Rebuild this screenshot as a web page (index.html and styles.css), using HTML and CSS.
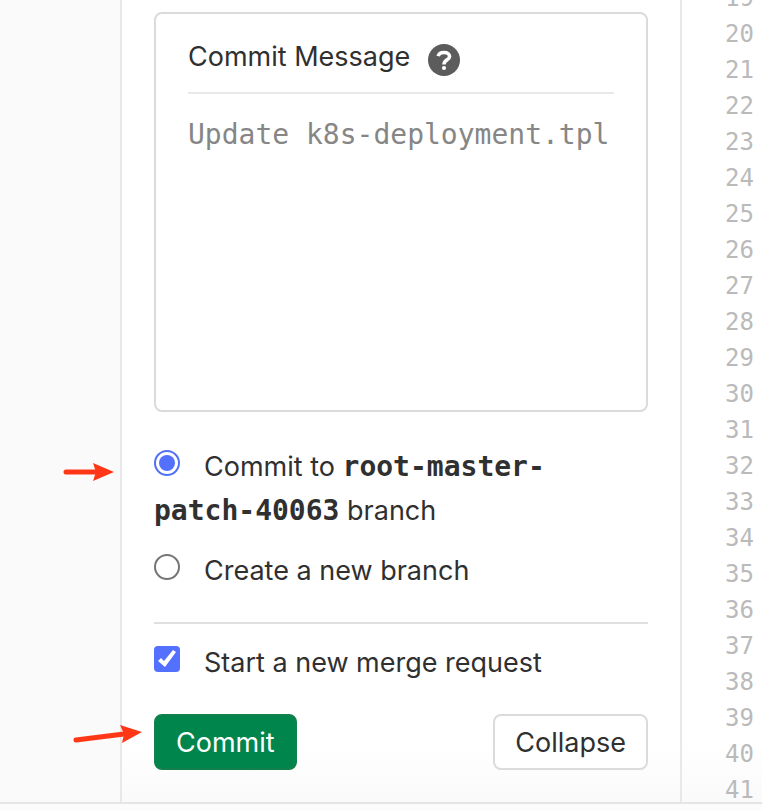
FILE: index.html
```html
<!DOCTYPE html>
<html lang="en">
  <head>
    <meta charset="UTF-8" />
    <meta name="viewport" content="width=device-width, initial-scale=1.0" />
    <title>Commit changes</title>
    <link rel="stylesheet" href="styles.css">
  </head>
  <body>
    <main class="ide">
      <div class="gutter"></div>

      <form class="commit-panel">
        <div class="message-box">
          <div class="message-header">
            <label for="message">Commit Message</label>
            <svg class="help-icon" viewBox="0 0 32 32" aria-hidden="true">
              <circle cx="16" cy="16" r="16" fill="#5c5c5c" />
              <path d="M10.2 12.2C10.7 9.8 12.8 8.5 16 8.5C19.4 8.5 21.6 10.1 21.6 12.6C21.6 16 16 15.6 16 20.4" fill="none" stroke="#fff" stroke-width="3.6" />
              <circle cx="16" cy="24" r="2.1" fill="#fff" />
            </svg>
          </div>
          <textarea id="message" placeholder="Update k8s-deployment.tpl"></textarea>
        </div>

        <label class="option">
          <input type="radio" name="branch" checked />Commit to <strong>root-master-patch-40063</strong> branch
        </label>
        <label class="option">
          <input type="radio" name="branch" />Create a new branch
        </label>

        <hr />

        <label class="option">
          <input type="checkbox" checked />Start a new merge request
        </label>

        <div class="actions">
          <button type="submit" class="btn btn-success">Commit</button>
          <button type="button" class="btn">Collapse</button>
        </div>
      </form>

      <div class="editor">
        <div class="line-numbers">
          <div>19</div>
          <div>20</div>
          <div>21</div>
          <div>22</div>
          <div>23</div>
          <div>24</div>
          <div>25</div>
          <div>26</div>
          <div>27</div>
          <div>28</div>
          <div>29</div>
          <div>30</div>
          <div>31</div>
          <div>32</div>
          <div>33</div>
          <div>34</div>
          <div>35</div>
          <div>36</div>
          <div>37</div>
          <div>38</div>
          <div>39</div>
          <div>40</div>
          <div>41</div>
        </div>
      </div>

      <!-- red pointers over the panel -->
      <svg class="arrow arrow-branch" viewBox="0 0 52 20" aria-hidden="true">
        <path d="M3 10H34" stroke="#ff3717" stroke-width="5" stroke-linecap="round" />
        <path d="M30 1L51 10L30 19L33 10Z" fill="#ff3717" />
      </svg>
      <svg class="arrow arrow-commit" viewBox="0 0 70 24" aria-hidden="true">
        <path d="M3 19L51 13" stroke="#ff3717" stroke-width="5" stroke-linecap="round" />
        <path d="M47 4L69 11L49 22L51 13Z" fill="#ff3717" />
      </svg>
    </main>
    <footer class="status-bar"></footer>
  </body>
</html>
```
FILE: styles.css
```css
* {
  box-sizing: border-box;
}
body {
  display: flex;
  flex-direction: column;
  height: 100vh;
  margin: 0;
  color: #303030;
  font-family: Inter, sans-serif;
  font-size: 27px;
  line-height: 44px;
}
.ide {
  position: relative;
  display: flex;
  flex: 1;
  min-height: 0;
  overflow: hidden;
  background: linear-gradient(to top, #fafafa, #fff 60px);
}
.gutter {
  width: 120px;
  background-color: #fafafa;
}
.commit-panel {
  width: 562px;
  padding: 12px 32px 32px;
  border-left: 2px solid #e8e8e8;
  border-right: 2px solid #e8e8e8;
}
.message-box {
  height: 400px;
  margin-bottom: 33px;
  padding: 0 32px;
  border: 2px solid #dbdbdb;
  border-radius: 8px;
  background-color: #fff;
}
.message-header {
  display: flex;
  align-items: center;
  gap: 18px;
  height: 80px;
  padding-top: 8px;
  border-bottom: 2px solid #e8e8e8;
}
.help-icon {
  width: 32px;
  height: 32px;
  margin-top: 6px;
}
textarea {
  display: block;
  width: 100%;
  height: 280px;
  padding: 19px 0;
  border: none;
  outline: none;
  resize: none;
  background: transparent;
  color: #303030;
  font-family: "DejaVu Sans Mono", monospace;
  font-size: 28px;
  line-height: 44px;
}
textarea::placeholder {
  color: #868686;
}
.option {
  display: block;
  margin-bottom: 16px;
  padding-right: 16px;
}
.option strong {
  font-family: "DejaVu Sans Mono", monospace;
  font-size: 28px;
  line-height: 28px;
}
input {
  appearance: none;
  width: 26px;
  height: 26px;
  margin: 0 24px 0 0;
  vertical-align: baseline;
}
input[type="radio"] {
  border: 2px solid #757575;
  border-radius: 50%;
  background-color: #fff;
}
input[type="radio"]:checked {
  padding: 3px;
  border-color: #5170f8;
  background-color: #5470ff;
  background-clip: content-box;
}
input[type="checkbox"] {
  border-radius: 4px;
  background-color: #fff;
}
input[type="checkbox"]:checked {
  background-color: #5470ff;
}
input[type="checkbox"]:checked::before {
  content: "";
  display: block;
  height: 26px;
  background-color: #fff;
  clip-path: polygon(4px 15px, 7px 12px, 10px 15px, 19px 4px, 22px 6px, 11px 21px);
}
hr {
  height: 2px;
  margin: 29px 0 17px;
  border: none;
  background-color: #dfdfdf;
}
.actions {
  display: flex;
  justify-content: space-between;
  margin-top: 29px;
}
.btn {
  height: 56px;
  padding: 2px 20px 0;
  border: 2px solid #dbdbdb;
  border-radius: 8px;
  background-color: #fff;
  color: #303030;
  font: inherit;
  cursor: pointer;
}
.btn-success {
  border-color: #12804a;
  background-color: #00854d;
  color: #fff;
}
.editor {
  flex: 1;
  padding: 0 8px;
  overflow: hidden;
}
.line-numbers {
  margin-top: -20px;
  color: #bababa;
  font-family: "DejaVu Sans Mono", monospace;
  font-size: 24px;
  line-height: 36px;
  text-align: right;
}
.arrow {
  position: absolute;
  fill: none;
}
.arrow-branch {
  top: 462px;
  left: 63px;
  width: 52px;
  height: 20px;
}
.arrow-commit {
  top: 721px;
  left: 73px;
  width: 70px;
  height: 24px;
}
.status-bar {
  height: 8px;
  border-top: 2px solid #e5e5e5;
  background-color: #fcfcfc;
}
```
